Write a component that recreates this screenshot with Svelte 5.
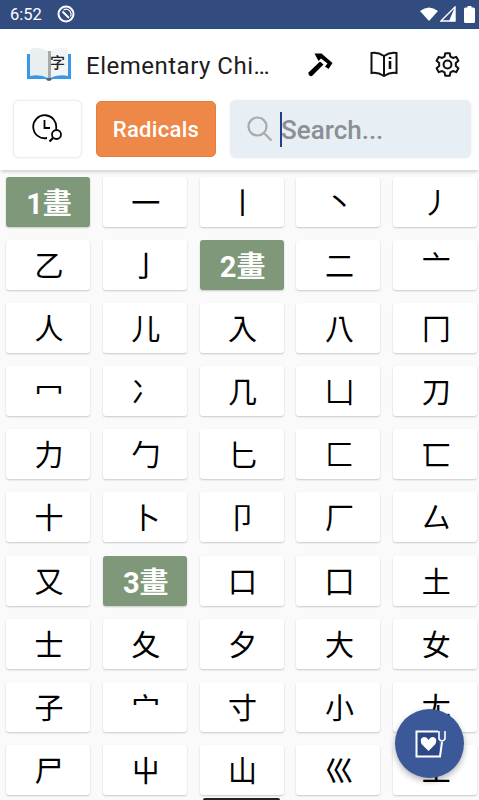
<script>
  // entries with h are the green stroke-count section headers
  const cells = [
    { h: '1畫' }, '一', '丨', '丶', '丿',
    '乙', '亅', { h: '2畫' }, '二', '亠',
    '人', '儿', '入', '八', '冂',
    '冖', '冫', '几', '凵', '刀',
    '力', '勹', '匕', '匚', '匸',
    '十', '卜', '卩', '厂', '厶',
    '又', { h: '3畫' }, '口', '囗', '土',
    '士', '夂', '夕', '大', '女',
    '子', '宀', '寸', '小', '尢',
    '尸', '屮', '山', '巛', '工'
  ];
</script>

<div class="screen">
  <div class="status">
    <span class="time">6:52</span>
    <svg class="dnd" width="18" height="18" viewBox="0 0 18 18">
      <circle cx="9" cy="9" r="7.500" fill="none" stroke="#fff" stroke-width="2" />
      <path d="M5.500 6.500 L12 13" stroke="#fff" stroke-width="2" fill="none" />
      <path d="M6.500 5 A5 5 0 0 1 13.500 11.500" stroke="#fff" stroke-width="1.200" fill="none" />
    </svg>
    <span class="spacer"></span>
    <svg width="18" height="16" viewBox="0 0 18 16"><path d="M0 5 Q9 -2 18 5 L9 15 Z" fill="#fff" /></svg>
    <svg width="16" height="16" viewBox="0 0 16 16">
      <path d="M1 15 L15 1 V15 Z" fill="none" stroke="#fff" stroke-width="1.400" />
      <path d="M9 15 L15 1 V15 Z" fill="#fff" />
    </svg>
    <svg class="batt" width="11" height="17" viewBox="0 0 11 17"><path d="M3.500 0 H7.500 V1.500 H9.500 Q11 1.500 11 3 V15.500 Q11 17 9.500 17 H1.500 Q0 17 0 15.500 V3 Q0 1.500 1.500 1.500 H3.500 Z" fill="#fff" /></svg>
  </div>

  <header class="appbar">
    <svg class="logo" width="46" height="40" viewBox="0 0 46 40">
      <path d="M1 9 H45 V34 H27 L23 36 L19 34 H1 Z" fill="#3b97e6" />
      <path d="M4 4 Q14 1 22 6 V33 Q14 29 4 31 Z" fill="#e9eef0" />
      <path d="M24 6 Q32 1 42 4 V31 Q32 29 24 33 Z" fill="#f1f3f4" />
      <path d="M21 33 H25 V35.500 H21 Z" fill="#5a6166" />
      <path d="M22 6 h3 V33 h-3 Z" fill="#a3abaf" />
    </svg>
    <span class="logo-char">字</span>
    <h1>Elementary Chinese Dictionary</h1>
    <svg class="act hammer" width="28" height="28" viewBox="0 0 28 28">
      <path d="M2.500 21.500 L14 10.500 L17.500 13.500 L6 25 Q4.500 25.500 3.200 24.300 Q2 23 2.500 21.500 Z" fill="#000" />
      <path d="M8.500 2.500 H15.500 L26.500 12 L22.500 18 L19 15.500 L21.500 12.500 L15 7.500 L12.500 10 Z" fill="#000" />
    </svg>
    <svg class="act book" width="28" height="27" viewBox="0 0 28 27" fill="none" stroke="#111" stroke-width="2">
      <path d="M14 5 Q8 1 1.500 2 V22 Q8 21 14 25 Q20 21 26.500 22 V2 Q20 1 14 5 Z" />
      <path d="M14 5 V25" />
      <path d="M20 6 V8 M20 10 V18" stroke-width="2.600" />
    </svg>
    <svg class="act gear" width="27" height="27" viewBox="0 0 24 24" fill="none" stroke="#111" stroke-width="1.800" stroke-linejoin="round">
      <circle cx="12" cy="12" r="3.500" />
      <path d="M10 2 H14 L14.600 5 L16.800 6.200 L19.700 5.200 L21.700 8.700 L19.400 10.700 V13.300 L21.700 15.300 L19.700 18.800 L16.800 17.800 L14.600 19 L14 22 H10 L9.400 19 L7.200 17.800 L4.300 18.800 L2.300 15.300 L4.600 13.300 V10.700 L2.300 8.700 L4.300 5.200 L7.200 6.200 L9.400 5 Z" />
    </svg>
  </header>

  <div class="toolbar">
    <button class="history" aria-label="History">
      <svg width="32" height="30" viewBox="0 0 32 30" fill="none" stroke="#000" stroke-width="1.800">
        <path d="M24 15 A11.500 11.500 0 1 0 15 24" />
        <path d="M12.500 6 V14 H18" />
        <circle cx="24.500" cy="20.500" r="4.500" />
        <path d="M21 24 L17.500 27.500" stroke-width="2.200" />
      </svg>
    </button>
    <button class="radicals">Radicals</button>
    <div class="search">
      <svg width="26" height="26" viewBox="0 0 26 26" fill="none" stroke="#aaa" stroke-width="2.200">
        <circle cx="10.500" cy="10.500" r="9" />
        <path d="M17 17 L24.500 24.500" />
      </svg>
      <span class="caret"></span>
      <span class="placeholder">Search...</span>
    </div>
  </div>

  <main class="grid">
    {#each cells as c}
      {#if c.h}
        <div class="cell head">{c.h}</div>
      {:else}
        <div class="cell">{c}</div>
      {/if}
    {/each}
  </main>

  <button class="fab" aria-label="Saved">
    <svg width="32" height="32" viewBox="0 0 32 32" fill="none">
      <path d="M2.500 3.500 H24 L26 28.500 H2.500 Z" fill="#2c4785" />
      <path d="M24 3.500 H2.500 V28.500 H26 L28 14" stroke="#fff" stroke-width="2" />
      <path d="M25 3 V11 Q28 15 31 11 V3" stroke="#fff" stroke-width="1.600" />
      <path d="M14.500 23 L7.500 16 Q5 10 10 9 Q13 9 14.500 12 Q16 9 19 9 Q24 10 21.500 16 Z" fill="#fff" />
    </svg>
  </button>
  <div class="handle"></div>
</div>

<style>
  :global(body) {
    margin: 0;
    background: #fafafa;
  }

  .screen {
    position: relative;
    width: 479px;
    height: 800px;
    overflow: hidden;
    background: #fafafa;
    font-family: Roboto, "Noto Sans CJK TC", sans-serif;
  }

  .status {
    height: 28px;
    display: flex;
    align-items: center;
    gap: 2px;
    padding: 0 4px 0 10px;
    background: #324c80;
    border-bottom: 1px solid #1f4b8f;
    color: #fff;
  }

  .time {
    font-size: 16.500px;
  }

  .dnd {
    margin-left: 13px;
  }

  .spacer {
    flex: 1;
  }

  .batt {
    margin-left: 6px;
  }

  .appbar {
    position: relative;
    height: 71px;
    display: flex;
    align-items: center;
    background: #fff;
    padding-left: 26px;
  }

  .logo {
    flex: none;
  }

  .logo-char {
    position: absolute;
    left: 50px;
    top: 23px;
    font-size: 15px;
    font-weight: 500;
    line-height: 22px;
    color: #222;
  }

  h1 {
    flex: none;
    width: 188px;
    margin: 3px 0 0 14px;
    font-size: 24px;
    font-weight: 400;
    letter-spacing: 0.5px;
    color: #1c1c1c;
    white-space: nowrap;
    overflow: hidden;
    text-overflow: ellipsis;
  }

  .act {
    flex: none;
  }

  .hammer {
    margin-left: 32px;
  }

  .book {
    margin-left: 36px;
  }

  .gear {
    margin-left: 36px;
  }

  .toolbar {
    position: relative;
    z-index: 1;
    height: 70px;
    box-sizing: border-box;
    display: flex;
    gap: 14px;
    padding: 0 8px 13px 13px;
    background: #fff;
    box-shadow: 0 3px 3px -1px rgba(0, 0, 0, 0.16);
  }

  button {
    border: none;
    padding: 0;
    font-family: inherit;
  }

  .history {
    width: 69px;
    height: 58px;
    display: flex;
    align-items: center;
    justify-content: center;
    background: #fff;
    border: 1px solid #eee;
    border-radius: 6px;
    box-shadow: 0 0 2px rgba(0, 0, 0, 0.1);
  }

  .radicals {
    width: 120px;
    height: 56px;
    margin-top: 1px;
    background: #ee8848;
    border: 1px solid #ea7c36;
    border-radius: 5px;
    color: #fff;
    font-size: 22px;
    font-weight: 500;
    letter-spacing: 0.3px;
  }

  .search {
    flex: 1;
    height: 58px;
    display: flex;
    align-items: center;
    padding-left: 17px;
    background: #e7eef4;
    border-radius: 6px;
    box-shadow: 0 0 2px rgba(0, 0, 0, 0.1);
  }

  .caret {
    width: 2px;
    height: 35px;
    margin-left: 7px;
    background: #1d3f91;
  }

  .placeholder {
    margin: 2px 0 0 -1px;
    font-size: 26px;
    font-weight: 500;
    color: #8b8f92;
  }

  .grid {
    display: grid;
    grid-template-columns: repeat(5, 84px);
    grid-auto-rows: 50px;
    column-gap: 12.800px;
    row-gap: 13.100px;
    padding: 7px 0 0 6px;
  }

  .cell {
    box-sizing: border-box;
    display: flex;
    align-items: center;
    justify-content: center;
    padding: 0 0 2px 2px;
    background: #fff;
    border-radius: 3px;
    box-shadow: 0 1px 2px rgba(0, 0, 0, 0.2);
    font-size: 29px;
    color: #000;
  }

  .head {
    background: #7e9879;
    color: #fff;
    font-weight: 700;
  }

  .fab {
    position: absolute;
    left: 395px;
    top: 709px;
    width: 69px;
    height: 69px;
    display: flex;
    align-items: center;
    justify-content: center;
    border-radius: 50%;
    background: #3b5998;
    box-shadow: 0 3px 6px rgba(0, 0, 0, 0.3);
  }

  .handle {
    position: absolute;
    left: 203px;
    bottom: 0;
    width: 77px;
    height: 2px;
    background: #222;
    border-radius: 2px 2px 0 0;
  }
</style>
